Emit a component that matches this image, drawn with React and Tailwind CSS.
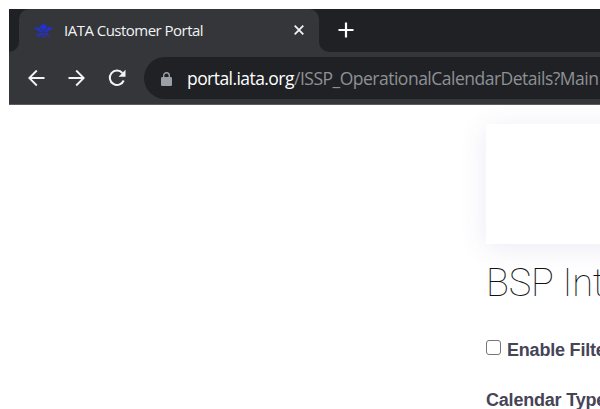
function AirlineMark() {
  return (
    <svg width="20" height="14" viewBox="0 0 20 14" fill="#2230d8" className="mt-px shrink-0">
      <ellipse cx="9.5" cy="3" rx="3.2" ry="2.7" />
      <path d="M0 3.5H4.8L7.2 6.6H11.8L14.2 3.5H19L17.6 5.2H16.6L15.8 6.6H14.6L13.6 7.8H5.4L4.4 6.6H3.2L2.4 5.2H1.4Z" />
      <path d="M3.4 9V13M5 13L6.2 9.4H6.8L8 13M7.8 9.3H10.8M9.3 9.3V13M11 13L12.4 9.4H13L15.4 13" stroke="#2230d8" strokeWidth="1.1" fill="none" />
    </svg>
  );
}

function Tab() {
  return (
    <div className="relative ml-[10px] h-[43px] w-[300px] rounded-t-[10px] bg-[#35363a] flex items-center pl-[15px] pr-[15px]">
      <AirlineMark />
      <span className="-mt-[2px] ml-[10px] w-[150px] whitespace-nowrap text-[15px] leading-[20px] tracking-[-0.52px] text-[#f1f3f4]">
        IATA Customer Portal
      </span>
      <svg width="10" height="10" viewBox="0 0 10 10" className="-mt-px ml-auto" stroke="#f1f3f4" strokeWidth="1.8">
        <path d="M0.7 0.7L9.3 9.3M9.3 0.7L0.7 9.3" />
      </svg>
      <svg width="10" height="10" viewBox="0 0 10 10" className="absolute bottom-0 -left-[10px]" fill="#35363a">
        <path d="M10 0V10H0A10 10 0 0 0 10 0Z" />
      </svg>
      <svg width="10" height="10" viewBox="0 0 10 10" className="absolute bottom-0 -right-[10px]" fill="#35363a">
        <path d="M0 0V10H10A10 10 0 0 1 0 0Z" />
      </svg>
    </div>
  );
}

function Toolbar() {
  return (
    <div className="flex h-[53px] items-center border-b border-[#5b5c60] bg-[#35363a] pl-[19px]">
      <svg width="17" height="17" viewBox="0 0 17 17" fill="none" stroke="#f1f3f4" strokeWidth="1.9">
        <path d="M16.5 8H1.5M8.8 0.5L1.3 8L8.8 15.5" />
      </svg>
      <svg width="17" height="17" viewBox="0 0 17 17" fill="none" stroke="#f1f3f4" strokeWidth="1.9" className="ml-[23px]">
        <path d="M0.5 8H15.5M8.2 0.5L15.7 8L8.2 15.5" />
      </svg>
      <svg width="18" height="18" viewBox="0 0 18 18" fill="none" className="ml-[23px]">
        <path d="M14.4 4A7.2 7.2 0 1 0 15.7 11.5" stroke="#f1f3f4" strokeWidth="2" />
        <path d="M17.5 0.7V7.7H10.5Z" fill="#f1f3f4" />
      </svg>
      <div className="ml-[18px] flex h-[42px] flex-1 items-center overflow-hidden rounded-l-full bg-[#202124] pl-[17px]">
        <svg width="11" height="14" viewBox="0 0 11 14" className="mt-[2px] shrink-0">
          <rect x="0" y="5" width="11" height="9" rx="1.2" fill="#9aa0a6" />
          <path d="M2.7 5.5V3.5A2.8 2.8 0 0 1 8.3 3.5V5.5" fill="none" stroke="#9aa0a6" strokeWidth="1.4" />
        </svg>
        <div className="ml-[15px] flex whitespace-nowrap text-[17.5px] leading-[24px] text-[#8e9195]">
          <span className="w-[107px] tracking-[-0.56px] text-white">portal.iata.org</span>
          <span className="tracking-[-0.5px]">/ISSP_OperationalCalendarDetails?Main</span>
        </div>
      </div>
    </div>
  );
}

export default function App() {
  return (
    <div className="h-[409px] w-[600px] overflow-hidden bg-white pl-[9px] pt-[9px]">
      <header className="font-['Open_Sans',sans-serif]">
        <div className="flex h-[43px] bg-[#202124]">
          <Tab />
          <svg width="16" height="16" viewBox="0 0 16 16" className="ml-[19px] mt-[13px]" stroke="#ffffff" strokeWidth="2.2">
            <path d="M8 0.5V15.5M0.5 8H15.5" />
          </svg>
        </div>
        <Toolbar />
      </header>
      <main className="h-[304px] overflow-hidden pl-[477px] pt-[19px] whitespace-nowrap">
        <div className="h-[120px] w-[400px] bg-white shadow-[0_4px_26px_rgba(82,63,145,0.11)]" />
        <h1 className="mt-[16px] font-['Roboto',sans-serif] text-[38px] font-thin leading-[46px] tracking-[-0.2px] text-[#101214]">
          BSP Int
        </h1>
        <div className="font-['Liberation_Sans',Arial,sans-serif] text-[18px] font-bold leading-[24px] tracking-[-0.2px] text-[#464457]">
          <label className="mt-[32px] flex h-[24px] items-center">
            <span className="-mt-[5px] mr-[6px] h-[15px] w-[15px] shrink-0 rounded-[3px] border border-[#767676] bg-white" />
            Enable Filte
          </label>
          <div className="mt-[26px]">Calendar Type</div>
        </div>
      </main>
    </div>
  );
}
